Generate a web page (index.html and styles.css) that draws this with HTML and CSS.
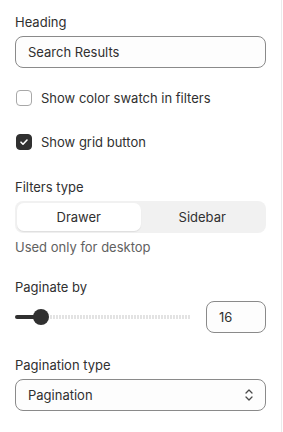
FILE: index.html
```html
<!DOCTYPE html>
<html lang="en">
<head>
    <meta charset="UTF-8">
    <meta name="viewport" content="width=device-width, initial-scale=1.0">
    <title>Search settings</title>
    <link rel="stylesheet" href="styles.css">
</head>
<body>
<div class="panel">
    <div class="field">
        <label class="field-label">Heading</label>
        <div class="text-input">Search Results</div>
    </div>

    <div class="check-row">
        <span class="checkbox"></span>
        <span>Show color swatch in filters</span>
    </div>

    <div class="check-row check-row-last">
        <span class="checkbox checked">
            <svg viewBox="0 0 16 16" width="16" height="16"><path d="M5 8.2l2 2 4-4.2" fill="none" stroke="#fff" stroke-width="1.6" stroke-linecap="round" stroke-linejoin="round"/></svg>
        </span>
        <span>Show grid button</span>
    </div>

    <div class="field">
        <label class="field-label">Filters type</label>
        <div class="segmented">
            <div class="segment active">Drawer</div>
            <div class="segment">Sidebar</div>
        </div>
        <p class="help-text">Used only for desktop</p>
    </div>

    <div class="field">
        <label class="field-label">Paginate by</label>
        <div class="range-row">
            <div class="range">
                <div class="range-fill"></div>
                <div class="range-thumb"></div>
            </div>
            <div class="number-input">16</div>
        </div>
    </div>

    <div class="field field-last">
        <label class="field-label">Pagination type</label>
        <div class="select">
            <span>Pagination</span>
            <svg viewBox="0 0 12 16" width="12" height="16"><path d="M3 6l3-3 3 3M3 10l3 3 3-3" fill="none" stroke="#4a4a4a" stroke-width="1.3" stroke-linecap="round" stroke-linejoin="round"/></svg>
        </div>
    </div>
</div>
</body>
</html>
```

FILE: styles.css
```css
body {
    margin: 0;
    font-family: Inter, "Noto Sans", sans-serif;
    font-size: 13px;
    color: #303030;
    background: #fff;
}

.panel {
    width: 251px;
    height: 432px;
    box-sizing: content-box;
    padding: 12px 15px 0 15px;
    border-right: 1px solid #ebebeb;
}

.field {
    margin-bottom: 20px;
}

.field-last {
    margin-top: 22px;
}

.field-label {
    display: block;
    line-height: 20px;
    margin-bottom: 4px;
}

.text-input,
.number-input,
.select {
    box-sizing: border-box;
    height: 32px;
    border: 1px solid #8a8a8a;
    border-radius: 8px;
    background: #fdfdfd;
    padding: 0 12px;
    display: flex;
    align-items: center;
}

.check-row {
    display: flex;
    align-items: center;
    gap: 9px;
    line-height: 20px;
    margin-bottom: 24px;
    padding-left: 1px;
}

.check-row-last {
    margin-bottom: 25px;
}

.checkbox {
    box-sizing: border-box;
    width: 16px;
    height: 16px;
    border: 1px solid #a8a8a8;
    border-radius: 4px;
    display: flex;
}

.checkbox.checked {
    background: #303030;
    border-color: #303030;
}

.checkbox svg {
    margin: -1px;
}

.segmented {
    display: flex;
    height: 32px;
    padding: 2px;
    box-sizing: border-box;
    background: #f1f1f1;
    border-radius: 8px;
}

.segment {
    flex: 1;
    display: flex;
    align-items: center;
    justify-content: center;
    border-radius: 7px;
}

.segment.active {
    background: #fff;
    box-shadow: 0 1px 1px rgba(0, 0, 0, 0.08);
}

.help-text {
    margin: 4px 0 0 0;
    line-height: 20px;
    color: #616161;
}

.range-row {
    display: flex;
    align-items: center;
    gap: 16px;
    margin-top: 1px;
}

.range {
    flex: 1;
    position: relative;
    height: 32px;
}

/* dotted track */
.range::before {
    content: "";
    position: absolute;
    left: 35px;
    right: 0;
    top: 16px;
    height: 4px;
    margin-top: -2px;
    background: repeating-linear-gradient(90deg, #e3e3e3 0 2px, transparent 2px 3px);
}

.range-fill {
    position: absolute;
    left: 0;
    top: 14px;
    width: 26px;
    height: 4px;
    background: #303030;
    border-radius: 2px 0 0 2px;
}

.range-thumb {
    position: absolute;
    left: 18px;
    top: 8px;
    width: 16px;
    height: 16px;
    border-radius: 50%;
    background: #303030;
}

.number-input {
    width: 60px;
}

.select {
    justify-content: space-between;
    padding-right: 10px;
}
```
